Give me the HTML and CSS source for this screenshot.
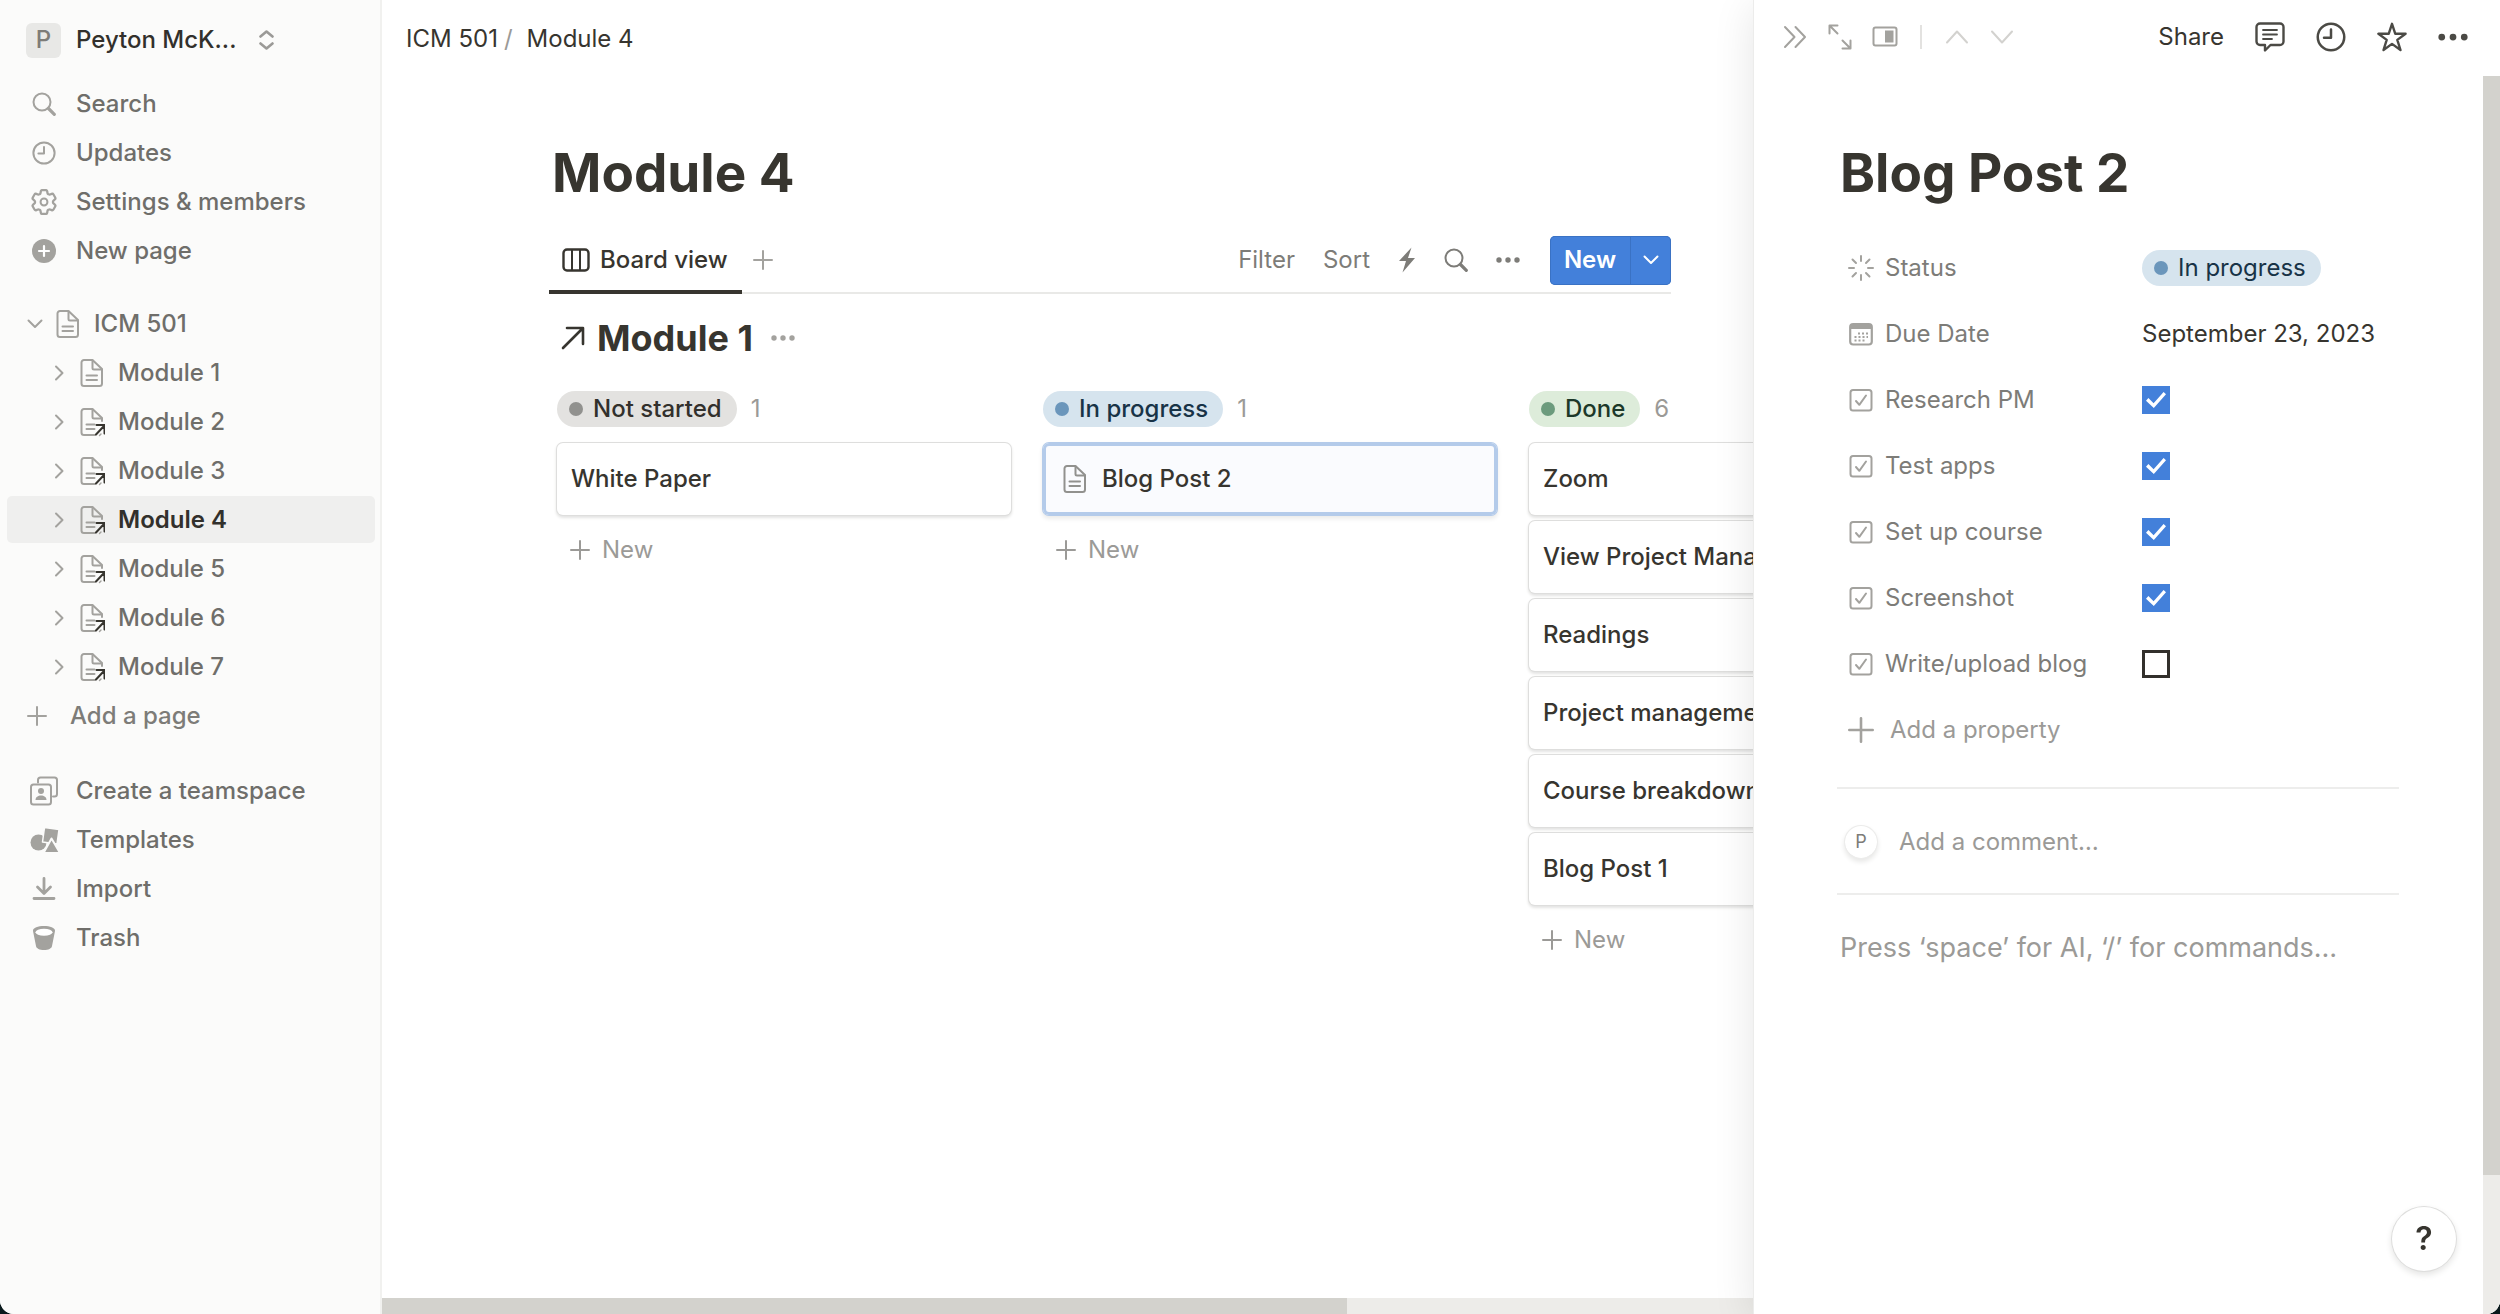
FILE: index.html
```html
<!DOCTYPE html>
<html lang="en">

<head>
    <meta charset="UTF-8">
    <meta name="viewport" content="width=device-width, initial-scale=1.0">
    <title>Module 4</title>
    <link rel="stylesheet" href="styles.css">
</head>

<body>
    <!-- Icon set -->
    <svg class="icon-set" aria-hidden="true">
        <symbol id="search" viewBox="0 0 24 24"><circle cx="10" cy="10" r="8.5" /><path d="M16.5 16.5l5.8 5.8" stroke-width="3.2" /></symbol>
        <symbol id="clock" viewBox="0 0 24 24"><circle cx="12" cy="12" r="10.6" /><path d="M12 6v6.6H6.4" /></symbol>
        <symbol id="gear" viewBox="2.2 2.2 19.6 19.6"><path stroke-width="1.7" d="M9.594 3.94c.09-.542.56-.94 1.11-.94h2.593c.55 0 1.02.398 1.11.94l.213 1.281c.063.374.313.686.645.87.074.04.147.083.22.127.325.196.72.257 1.075.124l1.217-.456a1.125 1.125 0 0 1 1.37.49l1.296 2.247a1.125 1.125 0 0 1-.26 1.431l-1.003.827c-.293.241-.438.613-.43.992a7.723 7.723 0 0 1 0 .255c-.008.378.137.75.43.991l1.004.827c.424.35.534.955.26 1.43l-1.298 2.247a1.125 1.125 0 0 1-1.369.491l-1.217-.456c-.355-.133-.75-.072-1.076.124a6.47 6.47 0 0 1-.22.128c-.331.183-.581.495-.644.869l-.213 1.281c-.09.543-.56.94-1.11.94h-2.594c-.55 0-1.019-.398-1.11-.94l-.213-1.281c-.062-.374-.312-.686-.644-.87a6.52 6.52 0 0 1-.22-.127c-.325-.196-.72-.257-1.076-.124l-1.217.456a1.125 1.125 0 0 1-1.369-.49l-1.297-2.247a1.125 1.125 0 0 1 .26-1.431l1.004-.827c.292-.24.437-.613.43-.991a6.932 6.932 0 0 1 0-.255c.007-.38-.138-.751-.43-.992l-1.004-.827a1.125 1.125 0 0 1-.26-1.43l1.297-2.247a1.125 1.125 0 0 1 1.37-.491l1.216.456c.356.133.751.072 1.076-.124.072-.044.146-.086.22-.128.332-.183.582-.495.644-.869l.214-1.28Z" /><circle cx="12" cy="12" r="2.6" stroke-width="1.5" /></symbol>
        <symbol id="plus-circle" viewBox="0 0 24 24"><circle cx="12" cy="12" r="12" fill="currentColor" stroke="none" /><path d="M12 7v10M7 12h10" stroke="#fff" stroke-width="2.2" /></symbol>
        <symbol id="plus" viewBox="0 0 20 20"><path d="M10 1v18M1 10h18" /></symbol>
        <symbol id="chevron-down" viewBox="0 0 16 16"><path d="M1.5 4.5L8 11l6.500-6.500" /></symbol>
        <symbol id="chevron-right" viewBox="0 0 16 16"><path d="M5 1.500L11.500 8 5 14.500" /></symbol>
        <symbol id="up-down" viewBox="0 0 15 20"><path d="M1.500 6.500l6-5 6 5M1.500 13.500l6 5 6-5" stroke-width="2.600" /></symbol>
        <symbol id="page" viewBox="0 0 26 30"><path d="M5 2h8.500L23 11v14.500a2.500 2.500 0 0 1-2.500 2.500H5a2.500 2.500 0 0 1-2.500-2.500v-21A2.500 2.500 0 0 1 5 2z" /><path d="M13.500 2.500v7.500a1.500 1.500 0 0 0 1.500 1.500h7.500M7.500 17.500h10.500M7.500 22h10.500" /></symbol>
        <symbol id="page-link" viewBox="0 0 26 30"><path d="M23 14v-3L13.500 2H5a2.500 2.500 0 0 0-2.500 2.500v21A2.500 2.500 0 0 0 5 28h11" /><path d="M13.500 2.500v7.500a1.500 1.500 0 0 0 1.500 1.500h7.500M7.500 17.500h8M7.500 22h8" /><path d="M17 27.500l8-8.500M17.500 18h8v8.500" stroke="#37352f" stroke-width="2" /><path d="M20.500 28.500l1.500-1.500" stroke-width="1.400" /></symbol>
        <symbol id="teamspace" viewBox="0 0 30 30"><path d="M9 6.500V4a2.500 2.500 0 0 1 2.500-2.500h14A2.500 2.500 0 0 1 28 4v14a2.500 2.500 0 0 1-2.500 2.500H24" /><rect x="2" y="8.500" width="20" height="20" rx="2.500" /><circle cx="12" cy="15" r="3" fill="currentColor" stroke="none" /><path d="M6.500 24c0-3 2.500-4.500 5.500-4.500s5.500 1.500 5.500 4.500z" fill="currentColor" stroke="none" /></symbol>
        <symbol id="templates" viewBox="0 0 30 30"><g fill="currentColor" stroke="none"><circle cx="9.500" cy="17.500" r="8" /><path d="M15.500 2.500l14.500 2-2 14.500-14.500-2z" stroke="#fbfbfa" stroke-width="1.500" /><path d="M22.500 13.500L31 28H14.500z" stroke="#fbfbfa" stroke-width="2" /></g></symbol>
        <symbol id="import" viewBox="0 0 24 24"><path d="M12 1.500v14M5.500 10l6.500 6.500 6.500-6.500M2 21.500h20" stroke-width="2.800" /></symbol>
        <symbol id="trash" viewBox="0 0 24 26"><path d="M1 5.500C1 3 6 1 12 1s11 2 11 4.500c0 1-.3 2-.5 3L20 21c-.4 2.500-3.500 4-8 4s-7.600-1.500-8-4L1.500 8.500C1.300 7.500 1 6.500 1 5.500z" fill="currentColor" stroke="none" /><ellipse cx="12" cy="7.300" rx="8.500" ry="3.500" fill="#fff" stroke="none" /></symbol>
        <symbol id="board" viewBox="0 0 28 24"><rect x="1.500" y="1.500" width="25" height="21" rx="3.500" stroke-width="2.400" /><path d="M10 2v20M18 2v20" /></symbol>
        <symbol id="bolt" viewBox="0 0 18 26"><path d="M13.500.500L1 14h7L4.500 25.500 17 11h-7z" fill="currentColor" stroke="none" /></symbol>
        <symbol id="dots" viewBox="0 0 24 8"><g fill="currentColor" stroke="none"><circle cx="3" cy="4" r="2.700" /><circle cx="12" cy="4" r="2.700" /><circle cx="21" cy="4" r="2.700" /></g></symbol>
        <symbol id="arrow-out" viewBox="0 0 24 24"><path d="M2 22L21.500 2.500M6 2h16v16" stroke-width="2.600" /></symbol>
        <symbol id="double-right" viewBox="0 0 26 26"><path d="M3 3l9.500 10L3 23M13.500 3L23 13l-9.500 10" /></symbol>
        <symbol id="expand" viewBox="0 0 26 26"><path d="M2.500 9.500v-8h8M3 2l7.500 7.500M23.500 16.500v8h-8M23 24l-7.500-7.500" /></symbol>
        <symbol id="peek" viewBox="0 0 26 26"><rect x="1.500" y="3.500" width="23" height="18" rx="2" /><rect x="13" y="6.500" width="8.500" height="12" fill="currentColor" stroke="none" /></symbol>
        <symbol id="up" viewBox="0 0 26 26"><path d="M3 18.500L13 7.500l10 11" /></symbol>
        <symbol id="down" viewBox="0 0 26 26"><path d="M3 7.500l10 11 10-11" /></symbol>
        <symbol id="comment" viewBox="0 0 30 30"><path d="M5 1.500h20a3.500 3.500 0 0 1 3.500 3.500v14.500A3.500 3.500 0 0 1 25 23H15.500L10 28.500V23H5a3.500 3.500 0 0 1-3.500-3.500V5A3.500 3.500 0 0 1 5 1.500z" stroke-width="2.400" /><path d="M8 8h14M8 12.500h14M8 17h9" stroke-width="1.800" /></symbol>
        <symbol id="star" viewBox="0 0 30 30"><path d="M15 1.800l3.300 10h10.300l-8.300 6.100 3.200 10.100L15 21.900 6.500 28l3.200-10.100-8.300-6.100h10.300z" stroke-width="2.400" /></symbol>
        <symbol id="status" viewBox="0 0 26 26"><path d="M13 1v5M13 20v5M1 13h5M20 13h5M4.500 4.500L8 8M18 18l3.500 3.500M4.500 21.500L8 18M18 8l3.500-3.500" /></symbol>
        <symbol id="calendar" viewBox="0 0 26 26"><rect x="2.200" y="3" width="21.600" height="20.500" rx="3" stroke-width="2.200" /><path d="M2.500 4h21v4h-21z" fill="currentColor" stroke="none" /><path d="M10 12.500h10M6.500 16h13.500M6.500 19.500h10" stroke-dasharray="2 2" stroke-linecap="butt" stroke-width="1.800" /></symbol>
        <symbol id="check-box" viewBox="0 0 26 26"><rect x="2.500" y="3" width="21" height="20.500" rx="2.500" /><path d="M8 14l3.300 3.800L18 8.500" /></symbol>
    </svg>

    <div class="app">
        <aside class="sidebar">
            <button class="workspace" type="button">
                <span class="workspace-logo">P</span>
                <span class="workspace-name">Peyton McK...</span>
                <svg class="icon workspace-arrows"><use href="#up-down" /></svg>
            </button>

            <nav class="side-list">
                <a class="side-row" href="#"><span class="side-icon"><svg class="icon icon-24"><use href="#search" /></svg></span>Search</a>
                <a class="side-row" href="#"><span class="side-icon"><svg class="icon icon-24"><use href="#clock" /></svg></span>Updates</a>
                <a class="side-row" href="#"><span class="side-icon"><svg class="icon icon-26"><use href="#gear" /></svg></span>Settings &amp; members</a>
                <a class="side-row" href="#"><span class="side-icon"><svg class="icon icon-24"><use href="#plus-circle" /></svg></span>New page</a>
            </nav>

            <nav class="side-list tree">
                <div class="tree-row">
                    <button class="toggle" type="button" aria-label="Collapse"><svg class="icon icon-16"><use href="#chevron-down" /></svg></button>
                    <a href="#"><svg class="icon icon-page"><use href="#page" /></svg>ICM 501</a>
                </div>
                <div class="tree-row child">
                    <button class="toggle" type="button" aria-label="Expand"><svg class="icon icon-16"><use href="#chevron-right" /></svg></button>
                    <a href="#"><svg class="icon icon-page"><use href="#page" /></svg>Module 1</a>
                </div>
                <div class="tree-row child">
                    <button class="toggle" type="button" aria-label="Expand"><svg class="icon icon-16"><use href="#chevron-right" /></svg></button>
                    <a href="#"><svg class="icon icon-page"><use href="#page-link" /></svg>Module 2</a>
                </div>
                <div class="tree-row child">
                    <button class="toggle" type="button" aria-label="Expand"><svg class="icon icon-16"><use href="#chevron-right" /></svg></button>
                    <a href="#"><svg class="icon icon-page"><use href="#page-link" /></svg>Module 3</a>
                </div>
                <div class="tree-row child active">
                    <button class="toggle" type="button" aria-label="Expand"><svg class="icon icon-16"><use href="#chevron-right" /></svg></button>
                    <a href="#"><svg class="icon icon-page"><use href="#page-link" /></svg>Module 4</a>
                </div>
                <div class="tree-row child">
                    <button class="toggle" type="button" aria-label="Expand"><svg class="icon icon-16"><use href="#chevron-right" /></svg></button>
                    <a href="#"><svg class="icon icon-page"><use href="#page-link" /></svg>Module 5</a>
                </div>
                <div class="tree-row child">
                    <button class="toggle" type="button" aria-label="Expand"><svg class="icon icon-16"><use href="#chevron-right" /></svg></button>
                    <a href="#"><svg class="icon icon-page"><use href="#page-link" /></svg>Module 6</a>
                </div>
                <div class="tree-row child">
                    <button class="toggle" type="button" aria-label="Expand"><svg class="icon icon-16"><use href="#chevron-right" /></svg></button>
                    <a href="#"><svg class="icon icon-page"><use href="#page-link" /></svg>Module 7</a>
                </div>
                <button class="side-row add-page" type="button"><svg class="icon icon-20"><use href="#plus" /></svg>Add a page</button>
            </nav>

            <nav class="side-list">
                <a class="side-row" href="#"><span class="side-icon"><svg class="icon icon-30"><use href="#teamspace" /></svg></span>Create a teamspace</a>
                <a class="side-row" href="#"><span class="side-icon"><svg class="icon icon-30"><use href="#templates" /></svg></span>Templates</a>
                <a class="side-row" href="#"><span class="side-icon"><svg class="icon icon-24"><use href="#import" /></svg></span>Import</a>
                <a class="side-row" href="#"><span class="side-icon"><svg class="icon icon-26"><use href="#trash" /></svg></span>Trash</a>
            </nav>
        </aside>

        <main class="main">
            <header class="breadcrumb">
                <a href="#">ICM 501</a><span class="slash">/</span><a href="#">Module 4</a>
            </header>

            <div class="page">
                <h1>Module 4</h1>

                <div class="view-bar">
                    <button class="tab" type="button"><svg class="icon icon-board"><use href="#board" /></svg>Board view</button>
                    <button class="add-view" type="button" aria-label="Add view"><svg class="icon icon-20"><use href="#plus" /></svg></button>
                    <div class="view-tools">
                        <button type="button">Filter</button>
                        <button type="button">Sort</button>
                        <button type="button" aria-label="Automations"><svg class="icon icon-bolt"><use href="#bolt" /></svg></button>
                        <button type="button" aria-label="Search"><svg class="icon icon-24"><use href="#search" /></svg></button>
                        <button type="button" aria-label="More"><svg class="icon icon-24"><use href="#dots" /></svg></button>
                    </div>
                    <div class="new-group">
                        <button class="new-button" type="button">New</button>
                        <button class="new-arrow" type="button" aria-label="New options"><svg class="icon icon-16"><use href="#chevron-down" /></svg></button>
                    </div>
                </div>

                <h2 class="source"><svg class="icon icon-24"><use href="#arrow-out" /></svg>Module 1<button type="button" aria-label="More"><svg class="icon icon-24"><use href="#dots" /></svg></button></h2>

                <div class="board">
                    <section class="column">
                        <header><span class="pill gray">Not started</span><span class="count">1</span></header>
                        <a class="card" href="#">White Paper</a>
                        <button class="add-card" type="button"><svg class="icon icon-20"><use href="#plus" /></svg>New</button>
                    </section>
                    <section class="column">
                        <header><span class="pill blue">In progress</span><span class="count">1</span></header>
                        <a class="card selected" href="#"><svg class="icon icon-page"><use href="#page" /></svg>Blog Post 2</a>
                        <button class="add-card" type="button"><svg class="icon icon-20"><use href="#plus" /></svg>New</button>
                    </section>
                    <section class="column">
                        <header><span class="pill green">Done</span><span class="count">6</span></header>
                        <a class="card" href="#">Zoom</a>
                        <a class="card" href="#">View Project Management</a>
                        <a class="card" href="#">Readings</a>
                        <a class="card" href="#">Project management</a>
                        <a class="card" href="#">Course breakdown</a>
                        <a class="card" href="#">Blog Post 1</a>
                        <button class="add-card" type="button"><svg class="icon icon-20"><use href="#plus" /></svg>New</button>
                    </section>
                </div>
            </div>

            <div class="scroll-x"><div class="thumb"></div></div>
        </main>

        <!-- Side peek -->
        <aside class="peek">
            <header class="peek-bar">
                <button type="button" aria-label="Close"><svg class="icon icon-26"><use href="#double-right" /></svg></button>
                <button type="button" aria-label="Open as page"><svg class="icon icon-26"><use href="#expand" /></svg></button>
                <button type="button" aria-label="Peek mode"><svg class="icon icon-26"><use href="#peek" /></svg></button>
                <span class="divider"></span>
                <button class="faded" type="button" aria-label="Previous"><svg class="icon icon-26"><use href="#up" /></svg></button>
                <button class="faded" type="button" aria-label="Next"><svg class="icon icon-26"><use href="#down" /></svg></button>
                <div class="peek-actions">
                    <button type="button">Share</button>
                    <button type="button" aria-label="Comments"><svg class="icon icon-30"><use href="#comment" /></svg></button>
                    <button type="button" aria-label="History"><svg class="icon icon-30"><use href="#clock" /></svg></button>
                    <button type="button" aria-label="Favorite"><svg class="icon icon-30"><use href="#star" /></svg></button>
                    <button type="button" aria-label="More"><svg class="icon icon-30"><use href="#dots" /></svg></button>
                </div>
            </header>

            <div class="peek-body">
                <div class="peek-content">
                    <h1>Blog Post 2</h1>

                    <div class="props">
                        <div class="prop"><span class="prop-name"><svg class="icon icon-26"><use href="#status" /></svg>Status</span><span class="pill blue light">In progress</span></div>
                        <div class="prop"><span class="prop-name"><svg class="icon icon-26"><use href="#calendar" /></svg>Due Date</span><span>September 23, 2023</span></div>
                        <div class="prop"><label class="prop-name" for="research"><svg class="icon icon-26"><use href="#check-box" /></svg>Research PM</label><input type="checkbox" id="research" checked></div>
                        <div class="prop"><label class="prop-name" for="apps"><svg class="icon icon-26"><use href="#check-box" /></svg>Test apps</label><input type="checkbox" id="apps" checked></div>
                        <div class="prop"><label class="prop-name" for="course"><svg class="icon icon-26"><use href="#check-box" /></svg>Set up course</label><input type="checkbox" id="course" checked></div>
                        <div class="prop"><label class="prop-name" for="shot"><svg class="icon icon-26"><use href="#check-box" /></svg>Screenshot</label><input type="checkbox" id="shot" checked></div>
                        <div class="prop"><label class="prop-name" for="blog"><svg class="icon icon-26"><use href="#check-box" /></svg>Write/upload blog</label><input type="checkbox" id="blog"></div>
                        <button class="prop add-prop" type="button"><svg class="icon icon-26"><use href="#plus" /></svg>Add a property</button>
                    </div>

                    <div class="comment-row">
                        <span class="avatar">P</span>
                        <input type="text" placeholder="Add a comment…" aria-label="Add a comment">
                    </div>

                    <textarea class="editor" rows="4" placeholder="Press ‘space’ for AI, ‘/’ for commands…" aria-label="Page content"></textarea>
                </div>
                <div class="scroll-y"><div class="thumb"></div></div>
            </div>
        </aside>
    </div>

    <button class="help" type="button">?</button>
</body>

</html>
```

FILE: styles.css
```css
* {
    box-sizing: border-box;
}

html, body {
    margin: 0;
    padding: 0;
    background: #0b1a1d;
}

body {
    font-family: Inter, "Liberation Sans", sans-serif;
    font-size: 24px;
    line-height: 34px;
    color: #37352f;
}

button, input, textarea {
    font: inherit;
    color: inherit;
    background: none;
    border: 0;
    padding: 0;
    margin: 0;
}

a {
    color: inherit;
    text-decoration: none;
}

h1, h2 {
    margin: 0;
    font-weight: 700;
}

h1 {
    padding-left: 3px;
    font-size: 53px;
    line-height: 66px;
}

/* Icons */
.icon-set {
    display: none;
}

.icon {
    display: block;
    flex: none;
    fill: none;
    stroke: currentColor;
    stroke-width: 2;
    stroke-linecap: round;
    stroke-linejoin: round;
}

.icon-16 { width: 16px; height: 16px; }
.icon-20 { width: 20px; height: 20px; }
.icon-24 { width: 24px; height: 24px; }
.icon-26 { width: 26px; height: 26px; }
.icon-30 { width: 30px; height: 30px; }
.icon-page { width: 26px; height: 30px; }
.icon-board { width: 28px; height: 24px; }
.icon-bolt { width: 18px; height: 26px; }

.app {
    display: flex;
    height: 100vh;
    background: #fff;
    border-radius: 0 0 14px 14px;
    overflow: hidden;
}

/* Sidebar */
.sidebar {
    flex: 0 0 382px;
    background: #fbfbfa;
    border-right: 2px solid #f1f1ef;
    font-weight: 500;
    color: #6f6e6a;
}

.workspace {
    display: flex;
    align-items: center;
    width: 100%;
    height: 80px;
    padding: 0 26px;
    gap: 15px;
    font-weight: 500;
    color: #32302c;
}

.workspace-logo {
    width: 35px;
    height: 35px;
    border-radius: 6px;
    background: #e8e8e6;
    color: #7d7c78;
    text-align: center;
}

.workspace-arrows {
    width: 15px;
    height: 20px;
    margin-left: 8px;
    color: #9b9a97;
}

.side-list {
    display: flex;
    flex-direction: column;
    gap: 2px;
    margin: 0 5px 28px 7px;
}

.side-list:first-of-type {
    margin-bottom: 26px;
}

.side-list .icon {
    color: #a3a29e;
}

.side-row, .tree-row, .tree-row a {
    display: flex;
    align-items: center;
    height: 47px;
}

.side-row {
    gap: 15px;
    padding-left: 19px;
}

.side-icon {
    display: flex;
    justify-content: center;
    width: 35px;
}

.tree-row {
    gap: 9px;
    padding-left: 17px;
    border-radius: 5px;
}

.tree-row.child {
    padding-left: 41px;
}

.tree-row.active {
    background: #efefee;
    color: #32302c;
    font-weight: 600;
}

.tree-row a {
    flex: 1;
    gap: 13px;
}

.toggle {
    display: flex;
    justify-content: center;
    width: 22px;
}

.add-page {
    gap: 23px;
    padding-left: 20px;
    font-weight: 500;
    color: #7d7c78;
}

/* Main */
.main {
    display: flex;
    flex-direction: column;
    flex: 1;
    min-width: 0;
    overflow: hidden;
}

.breadcrumb {
    display: flex;
    align-items: center;
    height: 78px;
    padding-left: 24px;
}

.slash {
    margin: 0 14px 0 6px;
    color: #9b9a97;
}

.page {
    flex: 1;
    padding: 62px 83px 0 167px;
}

.view-bar {
    display: flex;
    align-items: center;
    height: 66px;
    margin-top: 22px;
    border-bottom: 2px solid #e9e9e7;
}

.tab {
    display: flex;
    align-items: center;
    align-self: flex-start;
    gap: 10px;
    height: 66px;
    padding: 2px 14px 0 13px;
    border-bottom: 4px solid #37352f;
    font-weight: 500;
}

.add-view {
    margin-left: 11px;
    color: #a3a29e;
}

.view-tools {
    display: flex;
    align-items: center;
    gap: 28px;
    margin: 0 30px 0 auto;
    color: #7d7c78;
}

.new-group {
    display: flex;
    height: 49px;
    border-radius: 5px;
    background: #4380da;
    box-shadow: inset 0 0 0 1px #3a72c4;
    color: #fff;
}

.new-button {
    width: 80px;
    font-weight: 600;
}

.new-arrow {
    display: flex;
    align-items: center;
    justify-content: center;
    width: 41px;
    border-left: 1px solid #3a72c4;
}

.source {
    display: flex;
    align-items: center;
    gap: 12px;
    margin-top: 22px;
    padding-left: 12px;
    font-size: 36px;
    line-height: 44px;
}

.source button {
    margin-left: 6px;
    color: #a3a29e;
}

.board {
    display: flex;
    gap: 32px;
    margin-top: 31px;
    padding-left: 8px;
}

.column {
    display: flex;
    flex: 0 0 454px;
    flex-direction: column;
    gap: 6px;
}

.column header {
    display: flex;
    align-items: center;
    gap: 14px;
    margin-bottom: 10px;
}

.pill {
    display: flex;
    align-items: center;
    gap: 10px;
    height: 36px;
    padding: 0 15px 0 12px;
    border-radius: 18px;
    font-weight: 500;
}

.pill::before {
    content: "";
    width: 14px;
    height: 14px;
    border-radius: 50%;
}

.gray { background: #e3e2e0; color: #32302c; }
.gray::before { background: #91918e; }
.blue { background: #d6e4ee; color: #183347; }
.blue::before { background: #6b96bb; }
.green { background: #ddecda; color: #1c3829; }
.green::before { background: #6c9b7d; }

.light {
    font-weight: 400;
}

.count {
    color: #9b9a97;
}

.card {
    display: flex;
    align-items: center;
    gap: 14px;
    height: 72px;
    padding: 0 14px;
    border-radius: 6px;
    background: #fff;
    box-shadow: 0 0 0 1px #dededd, 0 2px 3px 1px #e4e4e3;
    font-weight: 500;
    white-space: nowrap;
}

.card .icon {
    margin-left: 5px;
    color: #91918e;
}

.selected {
    background: #fafbfe;
    box-shadow: 0 0 0 1px #b4cbea, inset 0 0 0 3px #b4cbea, 0 3px 4px 1px #ececeb;
}

.add-card {
    display: flex;
    align-items: center;
    gap: 12px;
    height: 58px;
    padding-left: 13px;
    color: #9b9a97;
}

.scroll-x {
    height: 16px;
    background: #edece9;
}

.scroll-x .thumb {
    width: 70.3%;
    height: 100%;
}

.thumb {
    background: #d3d2cd;
}

/* Side peek */
.peek {
    display: flex;
    flex-direction: column;
    flex: 0 0 746px;
    background: #fff;
    box-shadow: 0 0 0 1px #ececeb, 0 6px 40px rgba(15, 15, 15, 0.11);
    position: relative;
}

.peek-bar {
    display: flex;
    align-items: center;
    gap: 19px;
    height: 76px;
    padding: 0 32px 2px 28px;
    color: #a3a29e;
}

.divider {
    width: 2px;
    height: 24px;
    margin: 0 3px;
    background: #e3e2e0;
}

.faded {
    color: #d3d2cf;
}

.peek-actions {
    display: flex;
    align-items: center;
    gap: 31px;
    margin-left: auto;
    color: #4b4a45;
}

.peek-actions button:first-child {
    color: #37352f;
}

.peek-body {
    display: flex;
    flex: 1;
}

.peek-content {
    flex: 1;
    padding: 64px 84px 0 83px;
}

.props {
    margin-top: 29px;
    padding-bottom: 24px;
    border-bottom: 2px solid #ededec;
}

.prop {
    display: flex;
    align-items: center;
    height: 66px;
    padding-left: 11px;
}

.prop-name {
    display: flex;
    align-items: center;
    gap: 11px;
    width: 294px;
    color: #7d7c78;
}

.prop .icon {
    color: #a3a29e;
}

.prop input {
    appearance: none;
    display: flex;
    align-items: center;
    justify-content: center;
    width: 28px;
    height: 28px;
    border: 3px solid #32302c;
}

.prop input:checked {
    border: 0;
    background: #4380da;
}

.prop input:checked::before {
    content: "";
    width: 20px;
    height: 16px;
    background: #fff;
    clip-path: polygon(12% 38%, 38% 71%, 88% 0%, 100% 14%, 39% 100%, 0% 54%);
}

.add-prop {
    gap: 16px;
    color: #9b9a97;
}

.comment-row {
    display: flex;
    align-items: center;
    gap: 22px;
    height: 106px;
    padding-top: 2px;
    padding-left: 8px;
    border-bottom: 2px solid #ededec;
}

.avatar {
    width: 32px;
    height: 32px;
    border-radius: 50%;
    box-shadow: 0 0 0 1px #ececeb, 0 3px 5px 1px #e8e8e7;
    font-size: 18px;
    line-height: 32px;
    text-align: center;
    color: #7d7c78;
}

.comment-row input {
    flex: 1;
}

.editor {
    display: block;
    width: 100%;
    margin-top: 36px;
    padding-left: 3px;
    font-size: 27px;
    resize: none;
    outline: 0;
}

::placeholder {
    color: #9b9a97;
    opacity: 1;
}

.scroll-y {
    width: 17px;
    background: #edece9;
}

.scroll-y .thumb {
    height: 88.8%;
}

.help {
    position: fixed;
    right: 44px;
    bottom: 43px;
    width: 64px;
    height: 64px;
    border-radius: 50%;
    background: #fff;
    box-shadow: 0 0 0 1px #dededd, 0 3px 6px 1px #e6e6e5;
    font-size: 32px;
    font-weight: 600;
}
```
